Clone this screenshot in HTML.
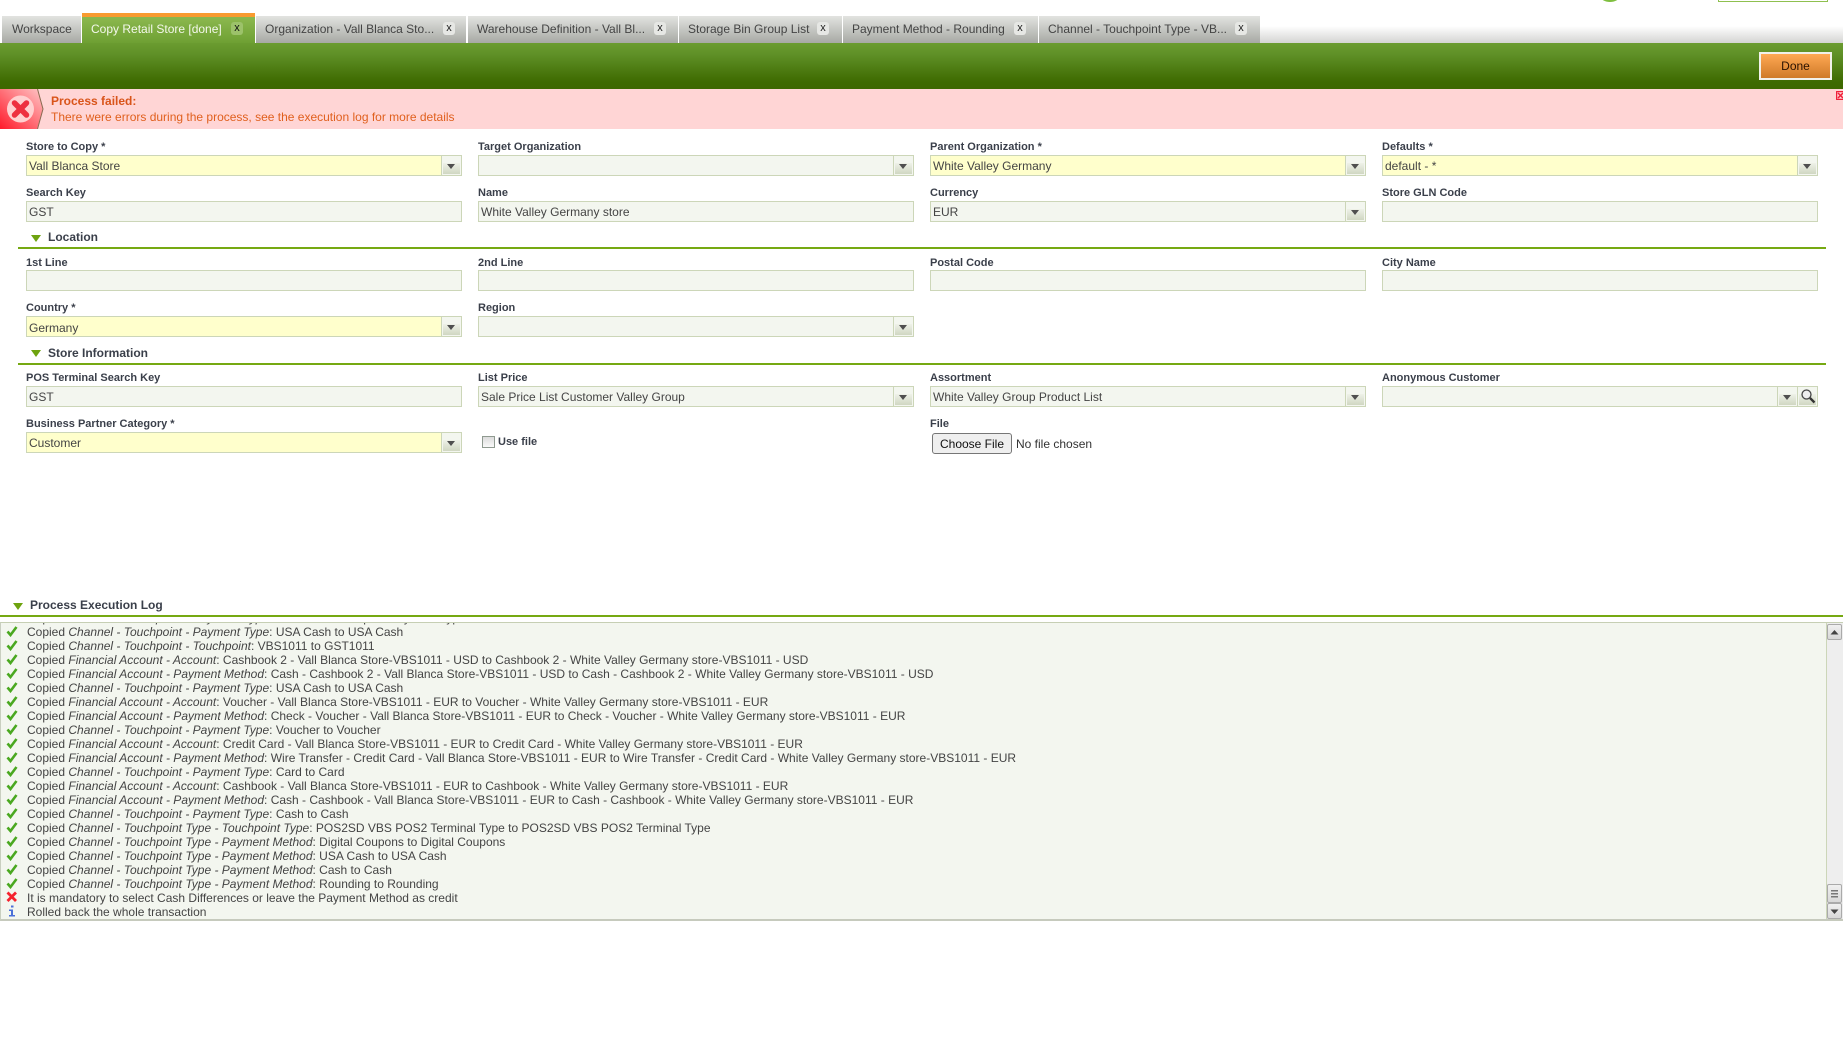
<!DOCTYPE html>
<html><head><meta charset="utf-8"><title>Copy Retail Store</title>
<style>
html,body{margin:0;padding:0;background:#fff;width:1843px;height:1043px;overflow:hidden;font-family:"Liberation Sans",sans-serif;color:#3c3c3c}
div,span,svg{position:absolute}
i,b{position:static}
.tab{top:16px;height:27px;background:linear-gradient(#e2e3e0,#a7a9a4);font-size:12px;line-height:26px;color:#444;white-space:nowrap;border-bottom:0;box-sizing:border-box}
.tab span{position:static}
.tab .x{position:absolute;top:6px;width:12px;height:13px;border-radius:3px;background:#e6e7e4;font-size:11px;line-height:12px;text-align:center;color:#222}
.l{font-size:11px;font-weight:bold;color:#3a3f4a;line-height:14px;white-space:nowrap;margin-top:1px}
.f{height:21px;background:#f3f6ef;border:1px solid #ccd6b8;box-sizing:border-box;font-size:12px;line-height:20px;padding-left:2px;color:#444;white-space:nowrap}
.y{background:#ffffcc}
.c1{left:26px;width:436px}.c2{left:478px;width:436px}.c3{left:930px;width:436px}.c4{left:1382px;width:436px}
.dd{right:0;top:0;width:20px;height:19px;border-left:1px solid #ccd6b8;box-sizing:border-box;background:#f3f6ef}
.dd::before{content:"";position:absolute;left:1px;top:7px;width:17px;height:11px;background:linear-gradient(#eef1e8,#d0d7c2)}
.dd::after{content:"";position:absolute;left:5px;top:8px;border-left:4.5px solid transparent;border-right:4.5px solid transparent;border-top:5px solid #4f4f4f}
.sec{left:48px;font-size:12px;font-weight:bold;color:#3a3f4a;line-height:14px;white-space:nowrap}
.tri{width:0;height:0;border-left:5.5px solid transparent;border-right:5.5px solid transparent;border-top:7px solid #6ea30f}
.line{height:2px;background:#76a912}
#log{left:0;top:622px;width:1843px;height:299px;background:#f3f6ef;border-top:1px solid #c6cfb4;border-left:1px solid #c9cfc0;border-bottom:2px solid #c6cabd;box-sizing:border-box;overflow:hidden}
.r{left:26px;font-size:12px;line-height:14px;height:14px;white-space:nowrap;color:#444}
.ic{left:5px;width:12px;height:12px}
</style></head><body>

<div style="left:1601px;top:-8px;width:18px;height:10px;border-radius:50%;background:#7fbf3f"></div>
<div style="left:1632px;top:-8px;font-size:11px;line-height:10px;color:#cfe3b0;font-weight:bold">Retail</div>
<div style="left:1718px;top:-6px;width:110px;height:8px;border:1px solid #8fc04f;box-sizing:border-box"></div>

<div style="left:1260px;top:26px;width:583px;height:17px;background:linear-gradient(#fff,#d4d4d2)"></div>
<div class="tab" style="left:2px;width:79px;padding-left:10px">Workspace</div>
<div class="tab" style="left:82px;top:13px;height:30px;width:173px;padding:0 0 0 9px;border-top:4px solid #f99b30;background:linear-gradient(#8cb84f,#6ea033);color:#f4f8ec;line-height:25px">Copy Retail Store [done]<span class="x" style="left:149px;top:5px;background:#9cc26a;color:#111">x</span></div>
<div class="tab" style="left:256px;width:210px;padding-left:9px">Organization - Vall Blanca Sto...<span class="x" style="left:187px">x</span></div>
<div class="tab" style="left:468px;width:210px;padding-left:9px">Warehouse Definition - Vall Bl...<span class="x" style="left:186px">x</span></div>
<div class="tab" style="left:679px;width:163px;padding-left:9px">Storage Bin Group List<span class="x" style="left:138px">x</span></div>
<div class="tab" style="left:843px;width:195px;padding-left:9px">Payment Method - Rounding<span class="x" style="left:171px">x</span></div>
<div class="tab" style="left:1039px;width:221px;padding-left:9px">Channel - Touchpoint Type - VB...<span class="x" style="left:196px">x</span></div>

<div style="left:0;top:43px;width:1843px;height:46px;background:linear-gradient(#6b9c30 0,#5f9027 25%,#3e6a00 85%,#3d6800)"></div>
<div style="left:1759px;top:52px;width:73px;height:28px;box-sizing:border-box;border:2px solid #f1f1ea;background:linear-gradient(#ffa954,#cf7a28);font-size:12px;line-height:24px;text-align:center;color:#2b1200">Done</div>

<div style="left:0;top:89px;width:1843px;height:40px;background:#ffd5d5"></div>
<svg style="left:0;top:89px" width="44" height="40" viewBox="0 0 44 40">
<defs><linearGradient id="g" x1="0" y1="1" x2="1" y2="0"><stop offset="0" stop-color="#ff1a2a"/><stop offset="1" stop-color="#ffc8c8"/></linearGradient></defs>
<path d="M0 0H37L43 20L37 40H0Z" fill="url(#g)"/>
<path d="M37.500 0L43 20L37.500 40" fill="none" stroke="#8a6a50" stroke-width="1"/>
<circle cx="20.500" cy="20" r="13.500" fill="#ffd0d0"/>
<path d="M14.500 14L26.500 26M26.500 14L14.500 26" stroke="#ee3040" stroke-width="5.500" stroke-linecap="round"/>
</svg>
<div style="left:51px;top:94px;font-size:12px;font-weight:bold;line-height:14px;color:#d9541a">Process failed:</div>
<div style="left:51px;top:110px;font-size:12px;line-height:14px;color:#e0601e">There were errors during the process, see the execution log for more details</div>
<svg style="left:1836px;top:91px" width="7" height="9" viewBox="0 0 7 9"><rect x="0.500" y="0.500" width="8" height="8" rx="1" fill="none" stroke="#f01f3a" stroke-width="1.500"/><path d="M2 2L7 7M7 2L2 7" stroke="#f01f3a" stroke-width="1.500"/></svg>

<div class="l c1" style="top:139px">Store to Copy *</div>
<div class="l c2" style="top:139px">Target Organization</div>
<div class="l c3" style="top:139px">Parent Organization *</div>
<div class="l c4" style="top:139px">Defaults *</div>
<div class="f y c1" style="top:155px">Vall Blanca Store<div class="dd"></div></div>
<div class="f c2" style="top:155px"><div class="dd"></div></div>
<div class="f y c3" style="top:155px">White Valley Germany<div class="dd"></div></div>
<div class="f y c4" style="top:155px">default - *<div class="dd"></div></div>

<div class="l c1" style="top:185px">Search Key</div>
<div class="l c2" style="top:185px">Name</div>
<div class="l c3" style="top:185px">Currency</div>
<div class="l c4" style="top:185px">Store GLN Code</div>
<div class="f c1" style="top:201px">GST</div>
<div class="f c2" style="top:201px">White Valley Germany store</div>
<div class="f c3" style="top:201px">EUR<div class="dd"></div></div>
<div class="f c4" style="top:201px"></div>

<div class="tri" style="left:31px;top:235px"></div>
<div class="sec" style="top:230px">Location</div>
<div class="line" style="left:18px;top:247px;width:1808px"></div>

<div class="l c1" style="top:255px">1st Line</div>
<div class="l c2" style="top:255px">2nd Line</div>
<div class="l c3" style="top:255px">Postal Code</div>
<div class="l c4" style="top:255px">City Name</div>
<div class="f c1" style="top:270px"></div>
<div class="f c2" style="top:270px"></div>
<div class="f c3" style="top:270px"></div>
<div class="f c4" style="top:270px"></div>

<div class="l c1" style="top:300px">Country *</div>
<div class="l c2" style="top:300px">Region</div>
<div class="f y c1" style="top:316px;line-height:22px">Germany<div class="dd"></div></div>
<div class="f c2" style="top:316px"><div class="dd"></div></div>

<div class="tri" style="left:31px;top:350px"></div>
<div class="sec" style="top:346px">Store Information</div>
<div class="line" style="left:18px;top:363px;width:1808px"></div>

<div class="l c1" style="top:370px">POS Terminal Search Key</div>
<div class="l c2" style="top:370px">List Price</div>
<div class="l c3" style="top:370px">Assortment</div>
<div class="l c4" style="top:370px">Anonymous Customer</div>
<div class="f c1" style="top:386px">GST</div>
<div class="f c2" style="top:386px">Sale Price List Customer Valley Group<div class="dd"></div></div>
<div class="f c3" style="top:386px">White Valley Group Product List<div class="dd"></div></div>
<div class="f c4" style="top:386px"><div class="dd" style="right:20px"></div>
<div style="right:0;top:0;width:20px;height:19px;border-left:1px solid #ccd6b8;box-sizing:border-box">
<div style="left:1px;top:7px;width:17px;height:11px;background:linear-gradient(#eef1e8,#d0d7c2)"></div>
<svg style="left:2px;top:1px" width="16" height="16" viewBox="0 0 16 16"><circle cx="6.500" cy="6.500" r="4.500" fill="#eee" stroke="#444" stroke-width="1.300"/><path d="M10 10L14.500 14.500" stroke="#333" stroke-width="2.300"/></svg>
</div></div>

<div class="l c1" style="top:416px">Business Partner Category *</div>
<div class="l" style="left:930px;top:416px">File</div>
<div class="f y c1" style="top:432px">Customer<div class="dd"></div></div>
<div style="left:482px;top:436px;width:13px;height:12px;box-sizing:border-box;border:1px solid #8f9a90;background:linear-gradient(#dcdcdc,#fafafa)"></div>
<div class="l" style="left:498px;top:434px">Use file</div>
<div style="left:932px;top:433px;width:80px;height:21px;box-sizing:border-box;border:1px solid #767676;border-radius:3px;background:#efefef;font-size:12px;line-height:20px;text-align:center;color:#111">Choose File</div>
<div style="left:1016px;top:437px;font-size:12px;line-height:14px;color:#333">No file chosen</div>

<div class="tri" style="left:13px;top:603px"></div>
<div class="sec" style="left:30px;top:598px">Process Execution Log</div>
<div class="line" style="left:0;top:615px;width:1843px"></div>

<div id="log">
<svg width="0" height="0"><defs>
<path id="ck" d="M1.500 6.500L4.500 10L10.500 2" fill="none" stroke="#4aa820" stroke-width="2.600"/>
</defs></svg>
<div class="r" style="top:-12px">Copied <i>Channel - Touchpoint - Payment Type</i>: Card to Card Copied Payment Type</div>
<svg class="ic" style="top:2px"><use href="#ck"/></svg><div class="r" style="top:2px">Copied <i>Channel - Touchpoint - Payment Type</i>: USA Cash to USA Cash</div>
<svg class="ic" style="top:16px"><use href="#ck"/></svg><div class="r" style="top:16px">Copied <i>Channel - Touchpoint - Touchpoint</i>: VBS1011 to GST1011</div>
<svg class="ic" style="top:30px"><use href="#ck"/></svg><div class="r" style="top:30px">Copied <i>Financial Account - Account</i>: Cashbook 2 - Vall Blanca Store-VBS1011 - USD to Cashbook 2 - White Valley Germany store-VBS1011 - USD</div>
<svg class="ic" style="top:44px"><use href="#ck"/></svg><div class="r" style="top:44px">Copied <i>Financial Account - Payment Method</i>: Cash - Cashbook 2 - Vall Blanca Store-VBS1011 - USD to Cash - Cashbook 2 - White Valley Germany store-VBS1011 - USD</div>
<svg class="ic" style="top:58px"><use href="#ck"/></svg><div class="r" style="top:58px">Copied <i>Channel - Touchpoint - Payment Type</i>: USA Cash to USA Cash</div>
<svg class="ic" style="top:72px"><use href="#ck"/></svg><div class="r" style="top:72px">Copied <i>Financial Account - Account</i>: Voucher - Vall Blanca Store-VBS1011 - EUR to Voucher - White Valley Germany store-VBS1011 - EUR</div>
<svg class="ic" style="top:86px"><use href="#ck"/></svg><div class="r" style="top:86px">Copied <i>Financial Account - Payment Method</i>: Check - Voucher - Vall Blanca Store-VBS1011 - EUR to Check - Voucher - White Valley Germany store-VBS1011 - EUR</div>
<svg class="ic" style="top:100px"><use href="#ck"/></svg><div class="r" style="top:100px">Copied <i>Channel - Touchpoint - Payment Type</i>: Voucher to Voucher</div>
<svg class="ic" style="top:114px"><use href="#ck"/></svg><div class="r" style="top:114px">Copied <i>Financial Account - Account</i>: Credit Card - Vall Blanca Store-VBS1011 - EUR to Credit Card - White Valley Germany store-VBS1011 - EUR</div>
<svg class="ic" style="top:128px"><use href="#ck"/></svg><div class="r" style="top:128px">Copied <i>Financial Account - Payment Method</i>: Wire Transfer - Credit Card - Vall Blanca Store-VBS1011 - EUR to Wire Transfer - Credit Card - White Valley Germany store-VBS1011 - EUR</div>
<svg class="ic" style="top:142px"><use href="#ck"/></svg><div class="r" style="top:142px">Copied <i>Channel - Touchpoint - Payment Type</i>: Card to Card</div>
<svg class="ic" style="top:156px"><use href="#ck"/></svg><div class="r" style="top:156px">Copied <i>Financial Account - Account</i>: Cashbook - Vall Blanca Store-VBS1011 - EUR to Cashbook - White Valley Germany store-VBS1011 - EUR</div>
<svg class="ic" style="top:170px"><use href="#ck"/></svg><div class="r" style="top:170px">Copied <i>Financial Account - Payment Method</i>: Cash - Cashbook - Vall Blanca Store-VBS1011 - EUR to Cash - Cashbook - White Valley Germany store-VBS1011 - EUR</div>
<svg class="ic" style="top:184px"><use href="#ck"/></svg><div class="r" style="top:184px">Copied <i>Channel - Touchpoint - Payment Type</i>: Cash to Cash</div>
<svg class="ic" style="top:198px"><use href="#ck"/></svg><div class="r" style="top:198px">Copied <i>Channel - Touchpoint Type - Touchpoint Type</i>: POS2SD VBS POS2 Terminal Type to POS2SD VBS POS2 Terminal Type</div>
<svg class="ic" style="top:212px"><use href="#ck"/></svg><div class="r" style="top:212px">Copied <i>Channel - Touchpoint Type - Payment Method</i>: Digital Coupons to Digital Coupons</div>
<svg class="ic" style="top:226px"><use href="#ck"/></svg><div class="r" style="top:226px">Copied <i>Channel - Touchpoint Type - Payment Method</i>: USA Cash to USA Cash</div>
<svg class="ic" style="top:240px"><use href="#ck"/></svg><div class="r" style="top:240px">Copied <i>Channel - Touchpoint Type - Payment Method</i>: Cash to Cash</div>
<svg class="ic" style="top:254px"><use href="#ck"/></svg><div class="r" style="top:254px">Copied <i>Channel - Touchpoint Type - Payment Method</i>: Rounding to Rounding</div>
<svg class="ic" style="top:268px"><path d="M1.500 1.500L10 10M10 1.500L1.500 10" stroke="#f5222d" stroke-width="2.800"/></svg><div class="r" style="top:268px">It is mandatory to select Cash Differences or leave the Payment Method as credit</div>
<svg class="ic" style="top:282px"><path d="M5 0.500h2.500v2H5zM3 4.500H7v5.500h2v1.500H3V10h2V6H3z" fill="#4a6fd8"/></svg><div class="r" style="top:282px">Rolled back the whole transaction</div>

<div style="left:1825px;top:0;width:17px;height:296px;background:#eeeeee;border-left:1px solid #ccd6b8;box-sizing:border-box"></div>
<div style="left:1826px;top:1px;width:15px;height:16px;box-sizing:border-box;border:1px solid #aaa;border-radius:2px;background:linear-gradient(#f0f0f0,#d8d8d8)"></div>
<svg style="left:1826px;top:1px" width="15" height="16"><path d="M3.500 10.500L7.500 6L11.500 10.500Z" fill="#444"/></svg>
<div style="left:1826px;top:261px;width:15px;height:19px;box-sizing:border-box;border:1px solid #aaa;border-radius:2px;background:linear-gradient(#f0f0f0,#d8d8d8)"></div>
<svg style="left:1826px;top:261px" width="15" height="19"><path d="M4 6h7v1.500H4zM4 9h7v1.500H4zM4 12h7v1.500H4z" fill="#777"/></svg>
<div style="left:1826px;top:280px;width:15px;height:16px;box-sizing:border-box;border:1px solid #aaa;border-radius:2px;background:linear-gradient(#f0f0f0,#d8d8d8)"></div>
<svg style="left:1826px;top:280px" width="15" height="16"><path d="M3.500 6.500L7.500 11L11.500 6.500Z" fill="#444"/></svg>
</div>

</body></html>
